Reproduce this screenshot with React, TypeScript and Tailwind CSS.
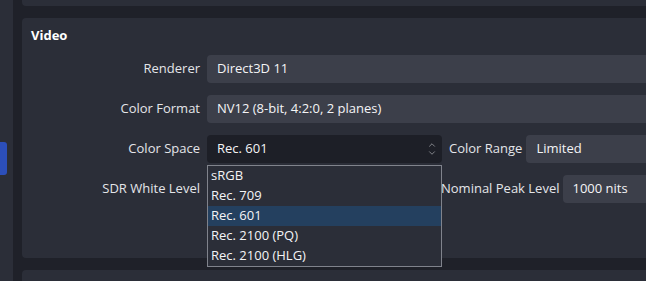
import { ChevronUp, ChevronDown } from "lucide-react";

const options = ["sRGB", "Rec. 709", "Rec. 601", "Rec. 2100 (PQ)", "Rec. 2100 (HLG)"];

function Field({ value, className = "" }: { value?: string; className?: string }) {
  return (
    <div
      className={`flex h-[28px] items-center rounded-[4px] bg-[#3c3f4a] pl-[10px] text-[#f4f4f6] ${className}`}
    >
      {value}
    </div>
  );
}

function Label({ children }: { children: string }) {
  return <div className="w-[185px] shrink-0 pr-[7px] text-right text-[#e4e5e9]">{children}</div>;
}

export default function App() {
  return (
    <div className="flex h-[281px] w-[646px] overflow-hidden bg-[#1f2129] font-['Open_Sans',sans-serif] text-[13px]">
      <div className="w-[13px] shrink-0 bg-[#2b2e38] pt-[142px]">
        <div className="h-[33px] w-[7px] rounded-r-[3px] bg-[#2c4fba]" />
      </div>

      <div className="ml-[9px] flex w-[700px] shrink-0 flex-col gap-[12px]">
        <div className="h-[6px] shrink-0 rounded-b-[4px] bg-[#2b2e38]" />

        <section className="relative h-[240px] shrink-0 rounded-l-[4px] bg-[#2b2e38] pt-[8px]">
          <h2 className="pl-[9px] text-[13px] font-bold leading-[18px] text-white">Video</h2>

          <div className="mt-[11px] flex flex-col gap-[12px]">
            <div className="flex items-center">
              <Label>Renderer</Label>
              <Field value="Direct3D 11" className="flex-1" />
            </div>
            <div className="flex items-center">
              <Label>Color Format</Label>
              <Field value="NV12 (8-bit, 4:2:0, 2 planes)" className="flex-1" />
            </div>
            <div className="flex items-center">
              <Label>Color Space</Label>
              <div className="flex h-[28px] w-[235px] shrink-0 items-center justify-between rounded-[4px] bg-[#1d1f27] pl-[10px] pr-[5px] text-[#f4f4f6]">
                <span>Rec. 601</span>
                <span className="flex flex-col items-center text-[#c9cbd1]">
                  <ChevronUp size={10} strokeWidth={1.4} className="-mb-[2px]" />
                  <ChevronDown size={10} strokeWidth={1.4} />
                </span>
              </div>
              <div className="shrink-0 pl-[7px] pr-[4px] text-[#e4e5e9]">Color Range</div>
              <Field value="Limited" className="flex-1" />
            </div>
            <div className="flex items-center">
              <Label>SDR White Level</Label>
              {/* value sits under the open list */}
              <Field className="w-[227px] shrink-0" />
              <div className="shrink-0 pl-[7px] pr-[3px] text-[#e4e5e9]">Nominal Peak Level</div>
              <Field value="1000 nits" className="flex-1" />
            </div>
          </div>

          <ul className="absolute left-[185px] top-[147px] w-[235px] border border-[#80838c] bg-[#2b2e38] text-[#f4f4f6]">
            {options.map((o) => (
              <li
                key={o}
                className={`flex h-[20px] items-center pl-[3px] ${o === "Rec. 601" ? "bg-[#24405f]" : ""}`}
              >
                {o}
              </li>
            ))}
          </ul>
        </section>

        <div className="flex-1 rounded-tl-[4px] bg-[#2b2e38]" />
      </div>
    </div>
  );
}
